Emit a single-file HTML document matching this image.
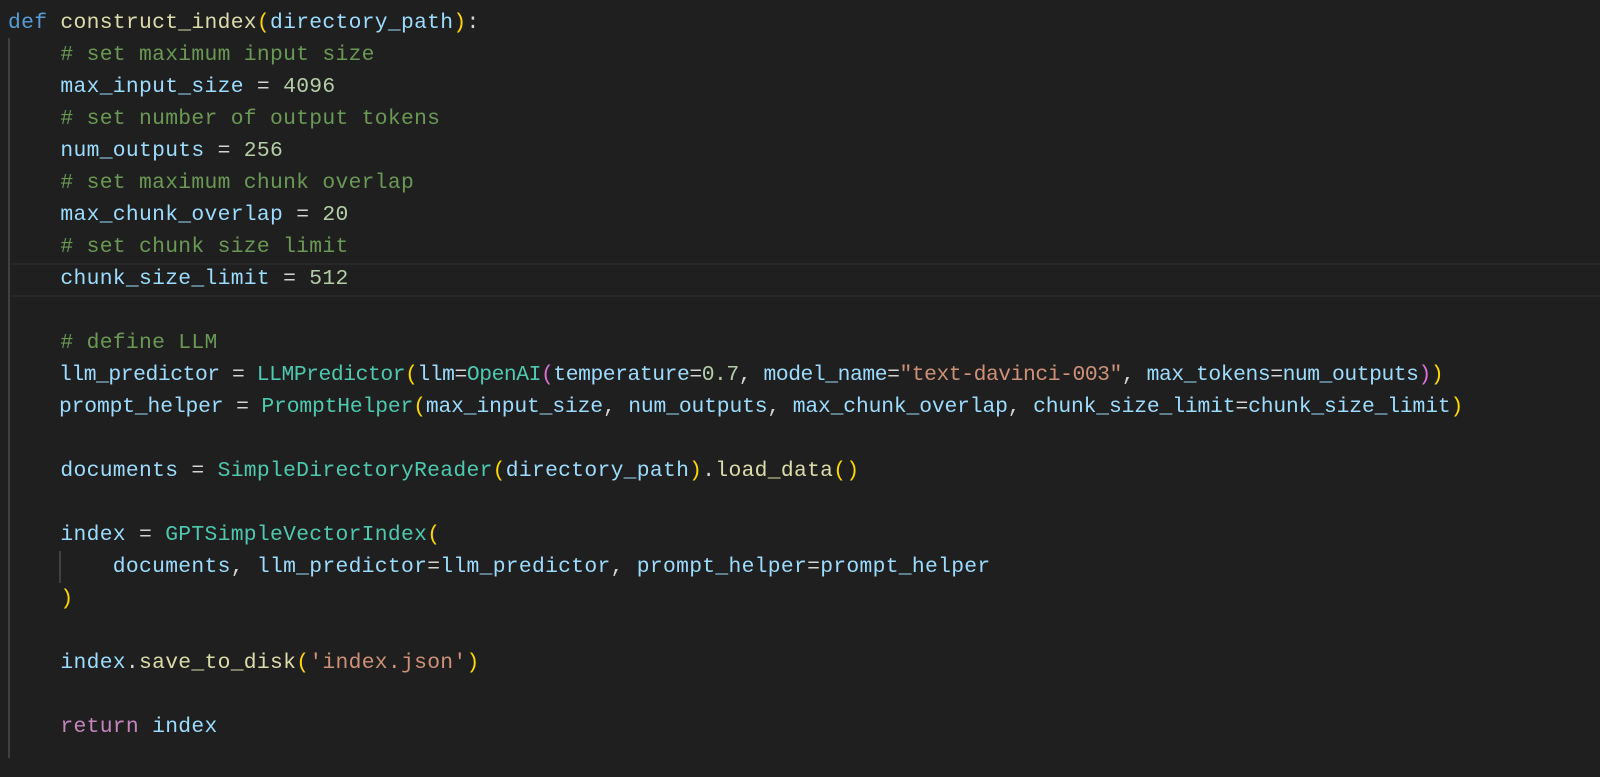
<!DOCTYPE html>
<html><head><meta charset="utf-8"><style>
html,body{margin:0;padding:0;background:#1f1f1f;width:1600px;height:777px;overflow:hidden}
.l{position:absolute;left:8px;height:32px;line-height:32px;font-family:"Liberation Mono",monospace;font-size:21.33px;letter-spacing:0.3px;white-space:pre;color:#d4d4d4}
.k{color:#569cd6}.f{color:#dcdcaa}.v{color:#9cdcfe}.n{color:#b5cea8}.c{color:#6a9955}.t{color:#4ec9b0}.s{color:#ce9178}.y{color:#ffd700}.p{color:#da70d6}.r{color:#c586c0}
.hl{position:absolute;left:8px;right:0;top:263px;height:30px;border-top:2px solid #282828;border-bottom:2px solid #282828}
.g{position:absolute;width:2px;background:#404040}
</style></head><body>
<div class="hl"></div>
<div class="g" style="left:8px;top:38px;height:720px"></div>
<div class="g" style="left:59px;top:551px;height:32px"></div>
<div class="l" style="top:7px"><span class="k">def</span> <span class="f">construct_index</span><span class="y">(</span><span class="v">directory_path</span><span class="y">)</span>:</div>
<div class="l" style="top:39px">    <span class="c"># set maximum input size</span></div>
<div class="l" style="top:71px">    <span class="v">max_input_size</span> = <span class="n">4096</span></div>
<div class="l" style="top:103px">    <span class="c"># set number of output tokens</span></div>
<div class="l" style="top:135px">    <span class="v">num_outputs</span> = <span class="n">256</span></div>
<div class="l" style="top:167px">    <span class="c"># set maximum chunk overlap</span></div>
<div class="l" style="top:199px">    <span class="v">max_chunk_overlap</span> = <span class="n">20</span></div>
<div class="l" style="top:231px">    <span class="c"># set chunk size limit</span></div>
<div class="l" style="top:263px">    <span class="v">chunk_size_limit</span> = <span class="n">512</span></div>
<div class="l" style="top:327px">    <span class="c"># define LLM</span></div>
<div class="l" style="top:359px;left:59px;letter-spacing:-0.44px"><span class="v">llm_predictor</span> = <span class="t">LLMPredictor</span><span class="y">(</span><span class="v">llm</span>=<span class="t">OpenAI</span><span class="p">(</span><span class="v">temperature</span>=<span class="n">0.7</span>, <span class="v">model_name</span>=<span class="s">"text-davinci-003"</span>, <span class="v">max_tokens</span>=<span class="v">num_outputs</span><span class="p">)</span><span class="y">)</span></div>
<div class="l" style="top:391px;left:59px;letter-spacing:-0.15px"><span class="v">prompt_helper</span> = <span class="t">PromptHelper</span><span class="y">(</span><span class="v">max_input_size</span>, <span class="v">num_outputs</span>, <span class="v">max_chunk_overlap</span>, <span class="v">chunk_size_limit</span>=<span class="v">chunk_size_limit</span><span class="y">)</span></div>
<div class="l" style="top:455px">    <span class="v">documents</span> = <span class="t">SimpleDirectoryReader</span><span class="y">(</span><span class="v">directory_path</span><span class="y">)</span>.<span class="f">load_data</span><span class="y">()</span></div>
<div class="l" style="top:519px">    <span class="v">index</span> = <span class="t">GPTSimpleVectorIndex</span><span class="y">(</span></div>
<div class="l" style="top:551px">        <span class="v">documents</span>, <span class="v">llm_predictor</span>=<span class="v">llm_predictor</span>, <span class="v">prompt_helper</span>=<span class="v">prompt_helper</span></div>
<div class="l" style="top:583px">    <span class="y">)</span></div>
<div class="l" style="top:647px">    <span class="v">index</span>.<span class="f">save_to_disk</span><span class="y">(</span><span class="s">'index.json'</span><span class="y">)</span></div>
<div class="l" style="top:711px">    <span class="r">return</span> <span class="v">index</span></div>
</body></html>
